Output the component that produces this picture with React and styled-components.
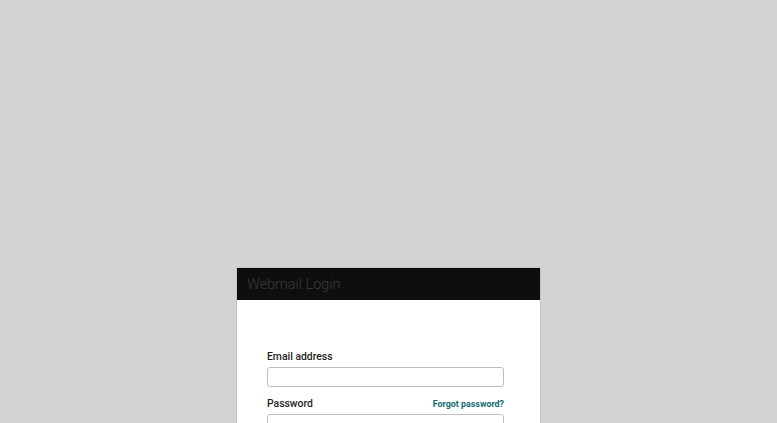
import React from 'react';
import styled, { createGlobalStyle } from 'styled-components';

const GlobalStyle = createGlobalStyle`
  html, body {
    margin: 0;
    padding: 0;
    height: 100%;
    background: #d3d3d3;
    font-family: Roboto, "Liberation Sans", Arial, sans-serif;
    overflow: hidden;
  }
`;

const Page = styled.div`
  height: 423px;
  display: flex;
  justify-content: center;
  padding-top: 267px;
  box-sizing: border-box;
`;

const Card = styled.div`
  width: 303px;
  background: #fff;
  border: 1px solid #c4c4c4;
  align-self: flex-start;
`;

const Header = styled.div`
  height: 32px;
  background: #0e0e0e;
  display: flex;
  align-items: center;
  padding-left: 10px;
`;

const Title = styled.h1`
  margin: 0;
  font-family: Roboto, "Liberation Sans", sans-serif;
  font-weight: 300;
  font-size: 14.4px;
  color: #3c3c3c;
`;

const Body = styled.form`
  padding: 50px 36px 20px 30px;
  display: flex;
  flex-direction: column;
`;

const LabelRow = styled.div`
  display: flex;
  justify-content: space-between;
  align-items: baseline;
  margin-bottom: 4px;
`;

const Label = styled.label`
  font-size: 10.4px;
  font-weight: 500;
  color: #1e1e1e;
`;

const Link = styled.a`
  font-size: 8.9px;
  font-weight: 700;
  color: #0f6a72;
  text-decoration: none;
`;

const Input = styled.input`
  box-sizing: border-box;
  width: 237px;
  height: 20px;
  border: 1px solid #bdbdbd;
  border-radius: 3px;
  margin: 0 0 ${p => p.$gap || 0}px;
  padding: 0 6px;
  outline: none;
`;

export default function App() {
  return (
    <>
      <GlobalStyle />
      <Page>
        <Card>
          <Header>
            <Title>Webmail Login</Title>
          </Header>
          <Body>
            <LabelRow>
              <Label>Email address</Label>
            </LabelRow>
            <Input type="email" $gap={10} />
            <LabelRow>
              <Label>Password</Label>
              <Link href="#">Forgot password?</Link>
            </LabelRow>
            <Input type="password" />
          </Body>
        </Card>
      </Page>
    </>
  );
}
